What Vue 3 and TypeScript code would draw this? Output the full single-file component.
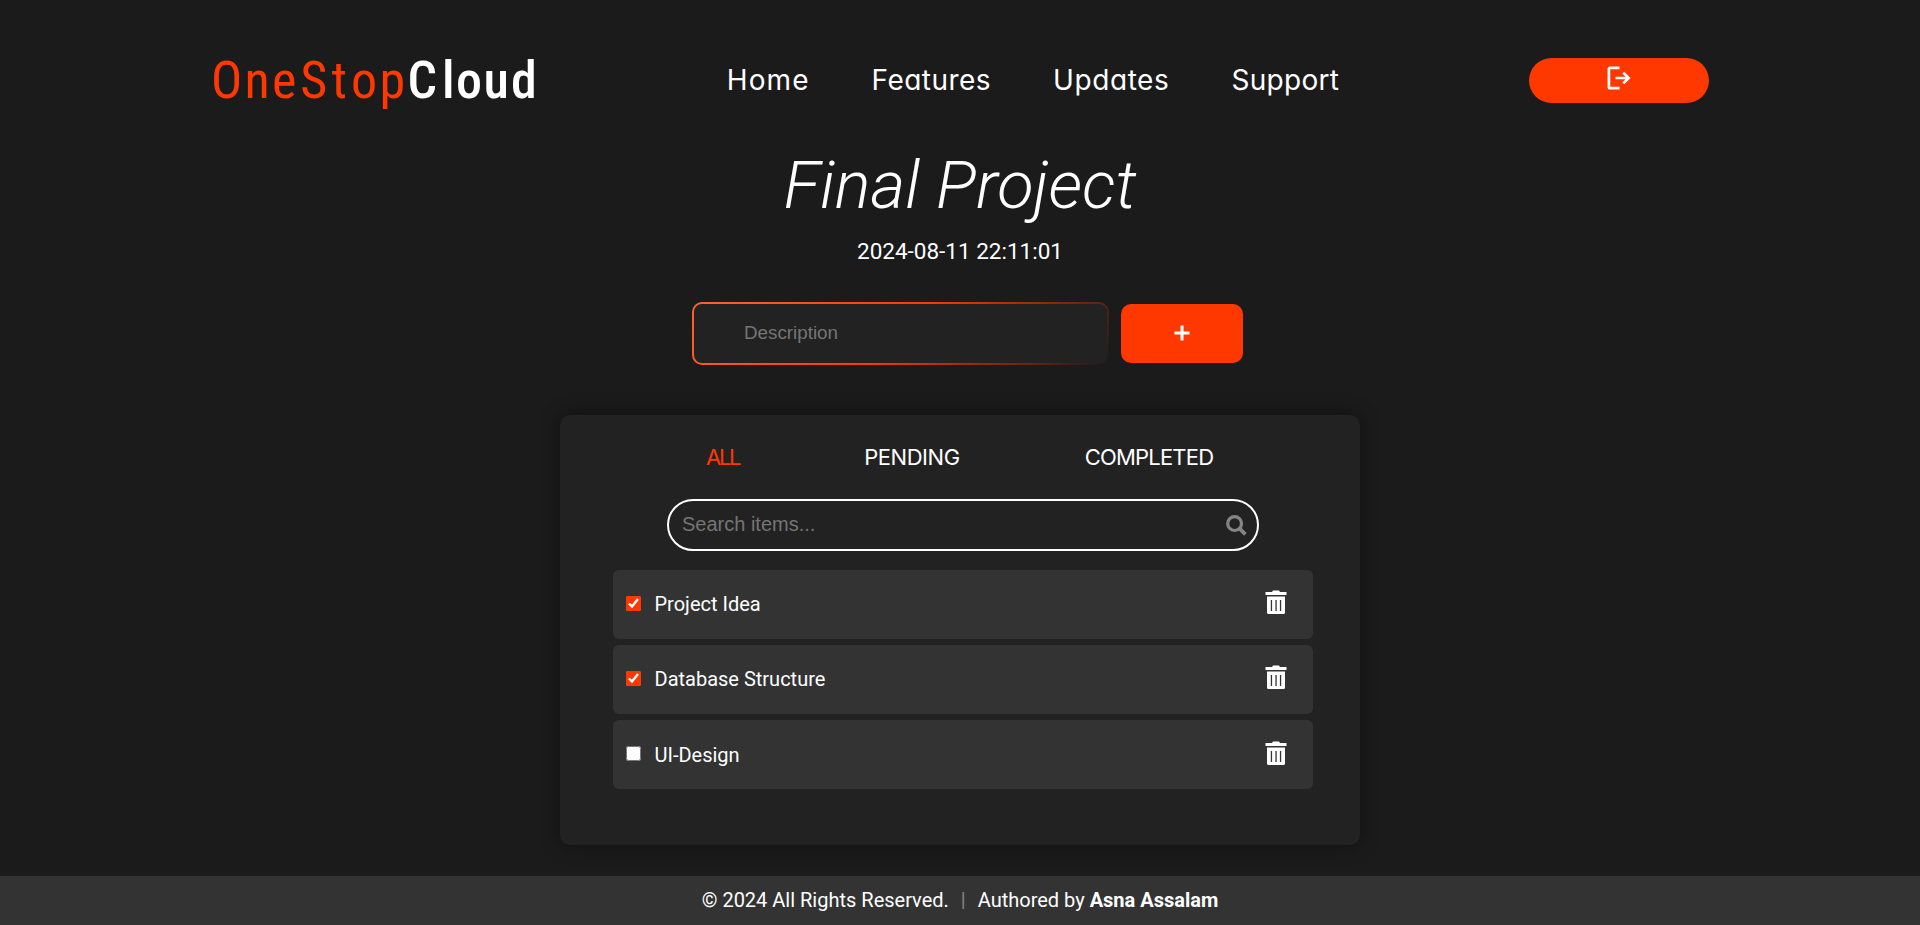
<script setup lang="ts">
import { computed, ref } from 'vue'

interface NavLink { label: string; tracking: number }
interface Tab { key: 'all' | 'pending' | 'completed'; label: string; tracking: number }
interface Task { id: number; text: string; done: boolean }

const links: NavLink[] = [
  { label: 'Home', tracking: 1.1 },
  { label: 'Features', tracking: 0.45 },
  { label: 'Updates', tracking: 0.6 },
  { label: 'Support', tracking: 0.3 },
]

const tabs: Tab[] = [
  { key: 'all', label: 'ALL', tracking: -2.3 },
  { key: 'pending', label: 'PENDING', tracking: -0.45 },
  { key: 'completed', label: 'COMPLETED', tracking: -0.8 },
]

const tasks = ref<Task[]>([
  { id: 1, text: 'Project Idea', done: true },
  { id: 2, text: 'Database Structure', done: true },
  { id: 3, text: 'UI-Design', done: false },
])

const active = ref<Tab['key']>('all')
const description = ref('')
const query = ref('')

const visible = computed(() =>
  tasks.value.filter(
    (t) =>
      (active.value === 'all' || t.done === (active.value === 'completed')) &&
      t.text.toLowerCase().includes(query.value.toLowerCase()),
  ),
)

function add() {
  const text = description.value.trim()
  if (!text) return
  tasks.value.push({ id: Date.now(), text, done: false })
  description.value = ''
}

function remove(id: number) {
  tasks.value = tasks.value.filter((t) => t.id !== id)
}
</script>

<template>
  <div class="page">
    <header class="header">
      <a class="logo">
        <svg class="logo-svg" width="324" height="60" viewBox="0 0 324 60">
          <text class="logo-one" y="47" x="-2 31.5 59 87.3 118.5 138 166.4">OneStop</text>
          <text class="logo-two" y="47" x="194.4 229 243 270.6 298">Cloud</text>
        </svg>
      </a>
      <nav class="nav">
        <a v-for="l in links" :key="l.label" class="nav-link" :style="{ letterSpacing: l.tracking + 'px' }">{{ l.label }}</a>
      </nav>
      <button class="logout" aria-label="Log out">
        <svg width="24" height="24" viewBox="0 0 24 24" fill="none" stroke="#fff" stroke-width="2.7">
          <path d="M12.5 1.9H3.1Q1.9 1.9 1.9 3.1V20.9Q1.9 22.1 3.1 22.1H12.5" />
          <path d="M8.5 12H22M16.3 6.6L21.7 12L16.3 17.4" />
        </svg>
      </button>
    </header>

    <main class="main">
      <h1 class="title">Final Project</h1>
      <p class="date">2024-08-11 22:11:01</p>

      <form class="add-form" @submit.prevent="add">
        <input v-model="description" class="add-input" type="text" placeholder="Description" />
        <button class="add-btn" aria-label="Add">
          <svg width="16" height="16" viewBox="0 0 16 16" stroke="#fff" stroke-width="3">
            <path d="M8 0.5V15.5M0.5 8H15.5" />
          </svg>
        </button>
      </form>

      <section class="card">
        <div class="tabs">
          <a
            v-for="t in tabs"
            :key="t.key"
            class="tab"
            :class="{ active: active === t.key }"
            :style="{ letterSpacing: t.tracking + 'px' }"
            @click="active = t.key"
          >{{ t.label }}</a>
        </div>

        <label class="search">
          <input v-model="query" class="search-input" type="text" placeholder="Search items..." />
          <svg class="search-icon" width="21" height="21" viewBox="0 0 21 21" fill="none" stroke="#858585">
            <circle cx="8.6" cy="8.6" r="6.9" stroke-width="3.2" />
            <path d="M13.4 13.4L19.4 19.4" stroke-width="3.7" />
          </svg>
        </label>

        <ul class="list">
          <li v-for="t in visible" :key="t.id" class="row">
            <input v-model="t.done" class="check" type="checkbox" />
            <span class="row-text">{{ t.text }}</span>
            <button class="trash" aria-label="Delete" @click="remove(t.id)">
              <svg width="22" height="24" viewBox="0 0 22 24">
                <path
                  fill="#fff"
                  fill-rule="evenodd"
                  d="M0.5 2H7L8 0.4H14L15 2H21.5V5H0.5ZM2 6.4H20V22.4Q20 24 18.4 24H3.6Q2 24 2 22.4ZM5.8 10V21H7.1V10ZM10.4 10V21H11.7V10ZM14.9 10V21H16.2V10Z"
                />
              </svg>
            </button>
          </li>
        </ul>
      </section>
    </main>

    <footer class="footer">
      <span>© 2024 All Rights Reserved.</span>
      <span class="divider">|</span>
      <span>Authored by <strong>Asna Assalam</strong></span>
    </footer>
  </div>
</template>

<style>
html,
body {
  margin: 0;
  background: #1b1b1b;
}
</style>

<style scoped>
.page {
  display: flex;
  flex-direction: column;
  height: 925px;
  overflow: hidden;
  background: #1b1b1b;
  color: #fff;
  font-family: Roboto, "Liberation Sans", sans-serif;
}

button {
  display: flex;
  align-items: center;
  justify-content: center;
  border: 0;
  padding: 0;
  cursor: pointer;
}

.header {
  box-sizing: border-box;
  display: flex;
  align-items: center;
  justify-content: space-between;
  height: 151px;
  padding: 10px 211px 0 213px;
}

.logo {
  display: block;
  height: 60px;
}

.logo-svg {
  display: block;
  overflow: visible;
}

.logo-svg text {
  font-family: Roboto, sans-serif;
  font-size: 52px;
  font-stretch: 86%;
}

.logo-one {
  fill: #ff3800;
  font-weight: 430;
}

.logo-two {
  fill: #fff;
  font-weight: 480;
}

.nav {
  display: flex;
  gap: 62px;
  padding-bottom: 2px;
}

.nav-link {
  font: 430 28px/40px Inter, sans-serif;
  font-feature-settings: "cv11";
}

.logout {
  width: 180px;
  height: 45px;
  padding: 0 1px 5px 0;
  border-radius: 23px;
  background: #ff3800;
  box-sizing: border-box;
}

.main {
  flex: 1;
  display: flex;
  flex-direction: column;
  align-items: center;
}

.title {
  margin: -1px 0 0;
  font-size: 67px;
  font-style: italic;
  font-weight: 300;
  line-height: 70px;
}

.date {
  margin: 17px 0 0;
  font-size: 22.5px;
  line-height: 28px;
}

.add-form {
  display: flex;
  align-items: center;
  gap: 12px;
  margin-top: 37px;
  padding-left: 15px;
}

.add-input {
  box-sizing: border-box;
  width: 417px;
  height: 63px;
  padding: 0 50px 2px;
  border: 2px solid transparent;
  border-radius: 10px;
  outline: 0;
  background:
    linear-gradient(#222, #222) padding-box,
    linear-gradient(135deg, #ff6136, #ff3800 50%, transparent) border-box;
  color: #fff;
  font: 18.8px "Liberation Sans", Arial, sans-serif;
}

.add-btn {
  width: 122px;
  height: 59px;
  padding-bottom: 2px;
  box-sizing: border-box;
  border-radius: 10px;
  background: #ff3800;
}

input::placeholder {
  color: #757575;
}

.card {
  box-sizing: border-box;
  width: 800px;
  height: 430px;
  margin-top: 50px;
  padding: 27px 47px 0 53px;
  border-radius: 10px;
  background: #222;
  box-shadow: 0 0 20px rgba(0, 0, 0, 0.4);
}

.tabs {
  display: flex;
  gap: 125px;
  padding-left: 93px;
}

.tab {
  font: 400 22px/30px Inter, sans-serif;
  cursor: pointer;
}

.tab.active {
  color: #ff3800;
}

.search {
  box-sizing: border-box;
  display: flex;
  align-items: center;
  width: 592px;
  height: 52px;
  margin: 27px 54px 0;
  padding: 0 10px 0 13px;
  border: 2px solid #fff;
  border-radius: 26px;
}

.search-input {
  flex: 1;
  min-width: 0;
  padding: 0 0 2px;
  border: 0;
  outline: 0;
  background: transparent;
  color: #fff;
  font: 20px "Liberation Sans", Arial, sans-serif;
}

.list {
  display: flex;
  flex-direction: column;
  gap: 6px;
  margin: 19px 0 0;
  padding: 0;
  list-style: none;
}

.row {
  box-sizing: border-box;
  display: flex;
  align-items: center;
  height: 69px;
  padding: 0 26px 0 13px;
  border-radius: 6px;
  background: #333;
}

.check {
  width: 15px;
  height: 15px;
  margin: 0 13.5px 2px 0;
  accent-color: #ff3800;
}

.row-text {
  flex: 1;
  padding-bottom: 2px;
  font-size: 20px;
  line-height: 24px;
}

.trash {
  margin-bottom: 5px;
  background: transparent;
}

.row:nth-child(3) .row-text {
  padding-bottom: 0;
}

.row:nth-child(3) .trash {
  margin-bottom: 3px;
}

.footer {
  box-sizing: border-box;
  display: flex;
  align-items: center;
  justify-content: center;
  gap: 12px;
  height: 49px;
  padding-bottom: 2px;
  background: #333;
  font-size: 20px;
}

.divider {
  color: #858585;
}
</style>
